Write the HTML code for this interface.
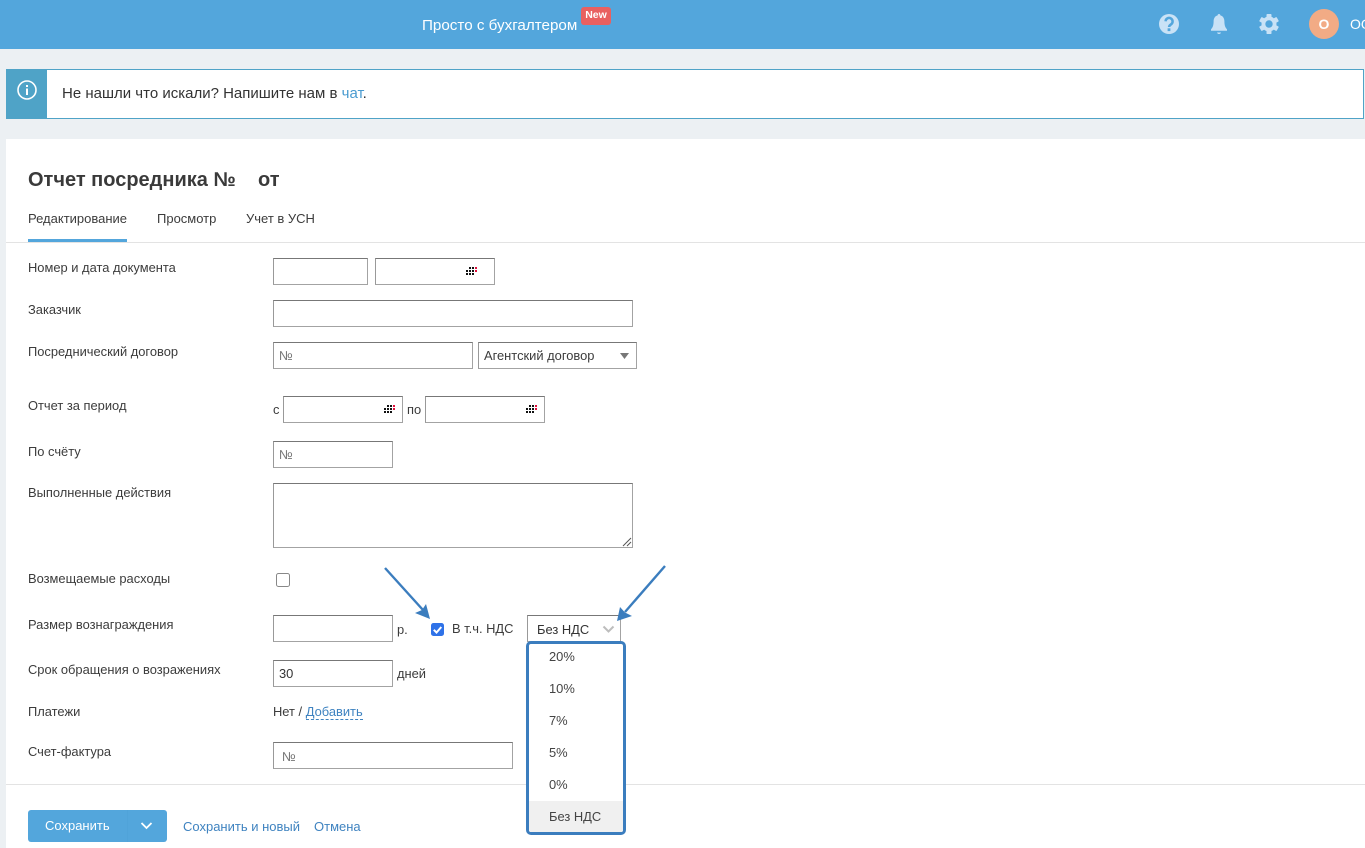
<!DOCTYPE html>
<html lang="ru"><head><meta charset="utf-8"><title>Отчет посредника</title>
<style>
html,body{margin:0;padding:0}
body{width:1365px;height:848px;overflow:hidden;position:relative;background:#ecf0f3;font-family:"Liberation Sans",sans-serif;color:#3c3c3c;font-size:12.9px}
.t{position:absolute;white-space:nowrap;line-height:16px}
.i{position:absolute;box-sizing:border-box;background:#fff;border:1px solid #a3a3a3;border-top-color:#777;border-left-color:#999}
.ph{position:absolute;left:5px;top:5px;line-height:16px;color:#757575;font-size:12.9px}
.cal{position:absolute;shape-rendering:crispEdges}
.o{position:absolute;white-space:nowrap;line-height:16px;color:#444}
a{color:inherit;text-decoration:none}
</style></head><body>
<div style="position:absolute;left:0;top:0;width:1365px;height:49px;background:#53a6dc"></div>
<div class="t" style="left:422px;top:18px;color:#fff;font-size:15.2px;">Просто с бухгалтером</div>
<div class="t" style="left:581px;top:7px;width:30px;height:18px;background:#e96060;border-radius:3px;color:#fff;font-size:10.5px;font-weight:bold;line-height:17px;text-align:center">New</div>
<svg style="position:absolute;left:1155px;top:10px" width="130" height="30" viewBox="0 0 130 30">
<circle cx="14" cy="14" r="10" fill="#c9e2f6"/>
<path d="M10.6 11.300a3.500 3.500 0 1 1 5.500 3c-1.300.9-2 1.400-2 2.700" fill="none" stroke="#53a6dc" stroke-width="2.500"/>
<rect x="12.600" y="18.300" width="2.800" height="2.800" fill="#53a6dc"/>
<path d="M64 4c.8 0 1.400.6 1.400 1.400 2.600.7 4 3 4 6 0 4 .9 6.200 2.600 8v1.400H56v-1.400c1.700-1.800 2.600-4 2.600-8 0-3 1.400-5.300 4-6C62.600 4.600 63.200 4 64 4zM62 22.500h4c-.3.9-1 1.500-2 1.500s-1.700-.6-2-1.500z" fill="#c9e2f6"/>
<g transform="translate(114 14)" fill="#c9e2f6"><circle r="7.500"/><rect x="-2.500" y="-10" width="5" height="20" rx=".8"/><rect x="-2.500" y="-10" width="5" height="20" rx=".8" transform="rotate(60)"/><rect x="-2.500" y="-10" width="5" height="20" rx=".8" transform="rotate(120)"/><circle r="3.700" fill="#53a6dc"/></g>
</svg>
<div style="position:absolute;left:1309px;top:9px;width:30px;height:30px;border-radius:50%;background:#f2ab85;color:#fff;font-weight:bold;font-size:14px;line-height:30px;text-align:center">О</div>
<div class="t" style="left:1350px;top:16px;color:#fff;font-size:14px">ОО</div>

<div style="position:absolute;left:6px;top:69px;width:1358px;height:50px;box-sizing:border-box;background:#fff;border:1px solid #4fa3c7"></div>
<div style="position:absolute;left:6px;top:69px;width:41px;height:50px;background:#4fa3c7"></div>
<svg style="position:absolute;left:16px;top:79px" width="22" height="22" viewBox="0 0 22 22"><circle cx="11" cy="11" r="9" fill="none" stroke="#fff" stroke-width="1.600"/><rect x="10" y="9.500" width="2" height="6.500" fill="#fff"/><rect x="10" y="6" width="2" height="2" fill="#fff"/></svg>
<div class="t" style="left:62px;top:86px;font-size:15px;color:#333">Не нашли что искали? Напишите нам в <span style="color:#4a9bd0">чат</span>.</div>

<div style="position:absolute;left:6px;top:139px;width:1359px;height:709px;background:#fff"></div>
<div class="t" style="left:28px;top:168px;font-size:20px;line-height:24px;font-weight:bold;color:#3a3a3a">Отчет посредника №</div>
<div class="t" style="left:258px;top:168px;font-size:20px;line-height:24px;font-weight:bold;color:#3a3a3a">от</div>
<div class="t" style="left:28px;top:211px;font-size:13px;">Редактирование</div>
<div class="t" style="left:157px;top:211px;font-size:13px;">Просмотр</div>
<div class="t" style="left:246px;top:211px;font-size:13px;">Учет в УСН</div>
<div style="position:absolute;left:6px;top:242px;width:1359px;height:1px;background:#e3e3e3"></div>
<div style="position:absolute;left:28px;top:239px;width:99px;height:3px;background:#53a6dc"></div>

<div class="t" style="left:28px;top:260px">Номер и дата документа</div>
<div class="t" style="left:28px;top:302px">Заказчик</div>
<div class="t" style="left:28px;top:344px">Посреднический договор</div>
<div class="t" style="left:28px;top:398px">Отчет за период</div>
<div class="t" style="left:28px;top:444px">По счёту</div>
<div class="t" style="left:28px;top:485px">Выполненные действия</div>
<div class="t" style="left:28px;top:571px">Возмещаемые расходы</div>
<div class="t" style="left:28px;top:617px">Размер вознаграждения</div>
<div class="t" style="left:28px;top:662px">Срок обращения о возражениях</div>
<div class="t" style="left:28px;top:704px">Платежи</div>
<div class="t" style="left:28px;top:744px">Счет-фактура</div>

<div class="i" style="left:273px;top:258px;width:95px;height:27px"></div>
<div class="i" style="left:375px;top:258px;width:120px;height:27px"><svg class="cal" style="left:90px;top:8px" width="12" height="8" viewBox="0 0 12 8"><path d="M3 0h2v2H3zM6 0h2v2H6zM0 3h2v2H0zM3 3h2v2H3zM6 3h2v2H6zM0 6h2v2H0zM3 6h2v2H3zM6 6h2v2H6z" fill="#111"/><path d="M9 0h2v2H9zM9 3h2v2H9z" fill="#e0103c"/></svg></div>
<div class="i" style="left:273px;top:300px;width:360px;height:27px"></div>
<div class="i" style="left:273px;top:342px;width:200px;height:27px"><span class="ph">№</span></div>
<div class="i" style="left:478px;top:342px;width:159px;height:27px"><span class="ph" style="color:#3c3c3c">Агентский договор</span><svg style="position:absolute;left:141px;top:10px" width="9" height="6"><path d="M0 0h9L4.500 6z" fill="#777"/></svg></div>
<div class="t" style="left:273px;top:402px">с</div>
<div class="i" style="left:283px;top:396px;width:120px;height:27px"><svg class="cal" style="left:100px;top:8px" width="12" height="8" viewBox="0 0 12 8"><path d="M3 0h2v2H3zM6 0h2v2H6zM0 3h2v2H0zM3 3h2v2H3zM6 3h2v2H6zM0 6h2v2H0zM3 6h2v2H3zM6 6h2v2H6z" fill="#111"/><path d="M9 0h2v2H9zM9 3h2v2H9z" fill="#e0103c"/></svg></div>
<div class="t" style="left:407px;top:402px">по</div>
<div class="i" style="left:425px;top:396px;width:120px;height:27px"><svg class="cal" style="left:100px;top:8px" width="12" height="8" viewBox="0 0 12 8"><path d="M3 0h2v2H3zM6 0h2v2H6zM0 3h2v2H0zM3 3h2v2H3zM6 3h2v2H6zM0 6h2v2H0zM3 6h2v2H3zM6 6h2v2H6z" fill="#111"/><path d="M9 0h2v2H9zM9 3h2v2H9z" fill="#e0103c"/></svg></div>
<div class="i" style="left:273px;top:441px;width:120px;height:27px"><span class="ph">№</span></div>
<div class="i" style="left:273px;top:483px;width:360px;height:65px"><svg style="position:absolute;right:0;bottom:0" width="10" height="10"><path d="M9 1L1 9M9 5L5 9" stroke="#555" stroke-width="1"/></svg></div>
<div style="position:absolute;left:276px;top:573px;width:14px;height:14px;box-sizing:border-box;border:1px solid #888;border-radius:2.500px;background:#fff"></div>
<div class="i" style="left:273px;top:615px;width:120px;height:27px"></div>
<div class="t" style="left:397px;top:622px">р.</div>
<div style="position:absolute;left:431px;top:623px;width:13px;height:13px;background:#2f72e8;border-radius:2.500px"><svg width="13" height="13"><path d="M2.800 6.800l2.700 2.700 4.800-5.500" fill="none" stroke="#fff" stroke-width="2"/></svg></div>
<div class="t" style="left:452px;top:621px">В т.ч. НДС</div>
<div class="i" style="left:527px;top:615px;width:94px;height:27px"></div>
<div class="t" style="left:537px;top:622px;color:#333">Без НДС</div>
<svg style="position:absolute;left:602px;top:625px" width="13" height="9"><path d="M1.500 1.500L6.500 6.500L11.500 1.500" fill="none" stroke="#bdbdbd" stroke-width="2"/></svg>
<div class="i" style="left:273px;top:660px;width:120px;height:27px"><span class="ph" style="color:#333">30</span></div>
<div class="t" style="left:397px;top:666px">дней</div>
<div class="t" style="left:273px;top:704px">Нет / <span style="color:#3f83c0;border-bottom:1px dashed #3f83c0">Добавить</span></div>
<div class="i" style="left:273px;top:742px;width:240px;height:27px"><span class="ph" style="left:8px;top:6px">№</span></div>

<div style="position:absolute;left:6px;top:784px;width:1359px;height:1px;background:#e3e3e3"></div>

<div style="position:absolute;left:526px;top:641px;width:100px;height:194px;box-sizing:border-box;background:#fff;border:3px solid #3b7dbe;border-radius:5px;overflow:hidden">
<div style="position:absolute;left:0;top:157px;width:94px;height:31px;background:#f0f0f0"></div>
<div class="o" style="left:20px;top:5px">20%</div>
<div class="o" style="left:20px;top:37px">10%</div>
<div class="o" style="left:20px;top:69px">7%</div>
<div class="o" style="left:20px;top:101px">5%</div>
<div class="o" style="left:20px;top:133px">0%</div>
<div class="o" style="left:20px;top:165px">Без НДС</div>
</div>

<svg style="position:absolute;left:380px;top:560px" width="290" height="70" viewBox="0 0 290 70">
<path d="M5 8L43 50" stroke="#3b7dbe" stroke-width="2.400" fill="none"/>
<path d="M50 59L35 53L42 50L46 44z" fill="#3b7dbe"/>
<path d="M285 6L245 52" stroke="#3b7dbe" stroke-width="2.400" fill="none"/>
<path d="M237 61L240 47L245 52.500L252 56z" fill="#3b7dbe"/>
</svg>

<div style="position:absolute;left:28px;top:810px;width:139px;height:32px;background:#53a6dc;border-radius:3px"></div>
<div style="position:absolute;left:127px;top:810px;width:1px;height:32px;background:#50a3d9"></div>
<div class="t" style="left:45px;top:818px;color:#fff;font-size:13px">Сохранить</div>
<svg style="position:absolute;left:140px;top:822px" width="13" height="8"><path d="M1.500 1L6.500 6l5-5" fill="none" stroke="#fff" stroke-width="1.800"/></svg>
<div class="t" style="left:183px;top:819px;color:#3f83c0;font-size:13px">Сохранить и новый</div>
<div class="t" style="left:314px;top:819px;color:#3f83c0;font-size:13px">Отмена</div>
</body></html>
